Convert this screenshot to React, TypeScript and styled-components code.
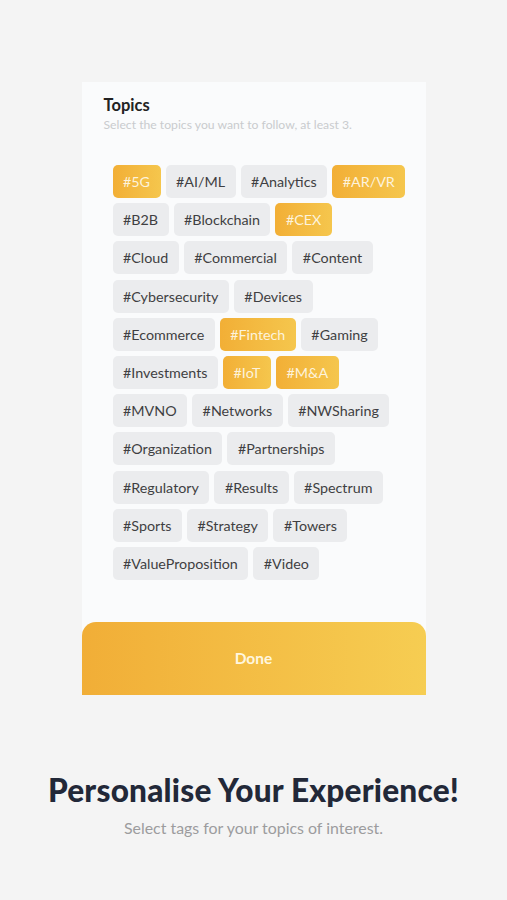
import React from "react";
import styled, { createGlobalStyle } from "styled-components";

const Global = createGlobalStyle`
  html, body { margin: 0; padding: 0; background: #f4f4f4; }
  body { font-family: Lato, "Open Sans", sans-serif; -webkit-font-smoothing: antialiased; }
`;

const Page = styled.div`
  width: 507px;
  height: 900px;
  display: flex;
  flex-direction: column;
  align-items: center;
  background: #f4f4f4;
`;

const Card = styled.div`
  margin-top: 82px;
  width: 344px;
  background: #fafbfc;
  display: flex;
  flex-direction: column;
`;

const Header = styled.div`
  padding: 13px 22px 0 22px;
`;

const Title = styled.div`
  font-size: 16.5px;
  font-weight: 700;
  color: #222;
  line-height: 21px;
`;

const Subtitle = styled.div`
  font-size: 12.2px;
  color: #c9cbce;
  line-height: 15px;
  margin-top: 1px;
`;

const ChipList = styled.div`
  display: flex;
  flex-direction: column;
  gap: 5.2px;
  padding: 33px 0 42px 31px;
`;

const ChipRow = styled.div`
  display: flex;
  gap: 5px;
`;

const Chip = styled.div<{ $on?: boolean }>`
  height: 33px;
  padding: 0 10.5px;
  border-radius: 5px;
  display: flex;
  align-items: center;
  font-size: 14.3px;
  color: ${(p) => (p.$on ? "#fdf3dc" : "#3f3f42")};
  background: ${(p) =>
    p.$on ? "linear-gradient(90deg, #f2af36 0%, #f5c64d 100%)" : "#ebecee"};
`;

const DoneButton = styled.div`
  height: 73px;
  border-radius: 14px 14px 0 0;
  background: linear-gradient(90deg, #f1ae37 0%, #f6cd52 100%);
  display: flex;
  align-items: center;
  justify-content: center;
  color: #fff6df;
  font-size: 15.5px;
  font-weight: 700;
`;

const Heading = styled.h1`
  margin: 77px 0 0 0;
  font-size: 31.6px;
  font-weight: 900;
  color: #222838;
  letter-spacing: 0.2px;
  line-height: 36px;
`;

const Tagline = styled.p`
  margin: 10px 0 0 0;
  font-size: 15.9px;
  color: #9c9c9e;
`;

const rows: [string, boolean?][][] = [
  [["#5G", true], ["#AI/ML"], ["#Analytics"], ["#AR/VR", true]],
  [["#B2B"], ["#Blockchain"], ["#CEX", true]],
  [["#Cloud"], ["#Commercial"], ["#Content"]],
  [["#Cybersecurity"], ["#Devices"]],
  [["#Ecommerce"], ["#Fintech", true], ["#Gaming"]],
  [["#Investments"], ["#IoT", true], ["#M&A", true]],
  [["#MVNO"], ["#Networks"], ["#NWSharing"]],
  [["#Organization"], ["#Partnerships"]],
  [["#Regulatory"], ["#Results"], ["#Spectrum"]],
  [["#Sports"], ["#Strategy"], ["#Towers"]],
  [["#ValueProposition"], ["#Video"]],
];

export default function App() {
  return (
    <Page>
      <Global />
      <Card>
        <Header>
          <Title>Topics</Title>
          <Subtitle>Select the topics you want to follow, at least 3.</Subtitle>
        </Header>
        <ChipList>
          {rows.map((row, i) => (
            <ChipRow key={i}>
              {row.map(([label, on]) => (
                <Chip key={label} $on={!!on}>
                  {label}
                </Chip>
              ))}
            </ChipRow>
          ))}
        </ChipList>
        <DoneButton>Done</DoneButton>
      </Card>
      <Heading>Personalise Your Experience!</Heading>
      <Tagline>Select tags for your topics of interest.</Tagline>
    </Page>
  );
}
